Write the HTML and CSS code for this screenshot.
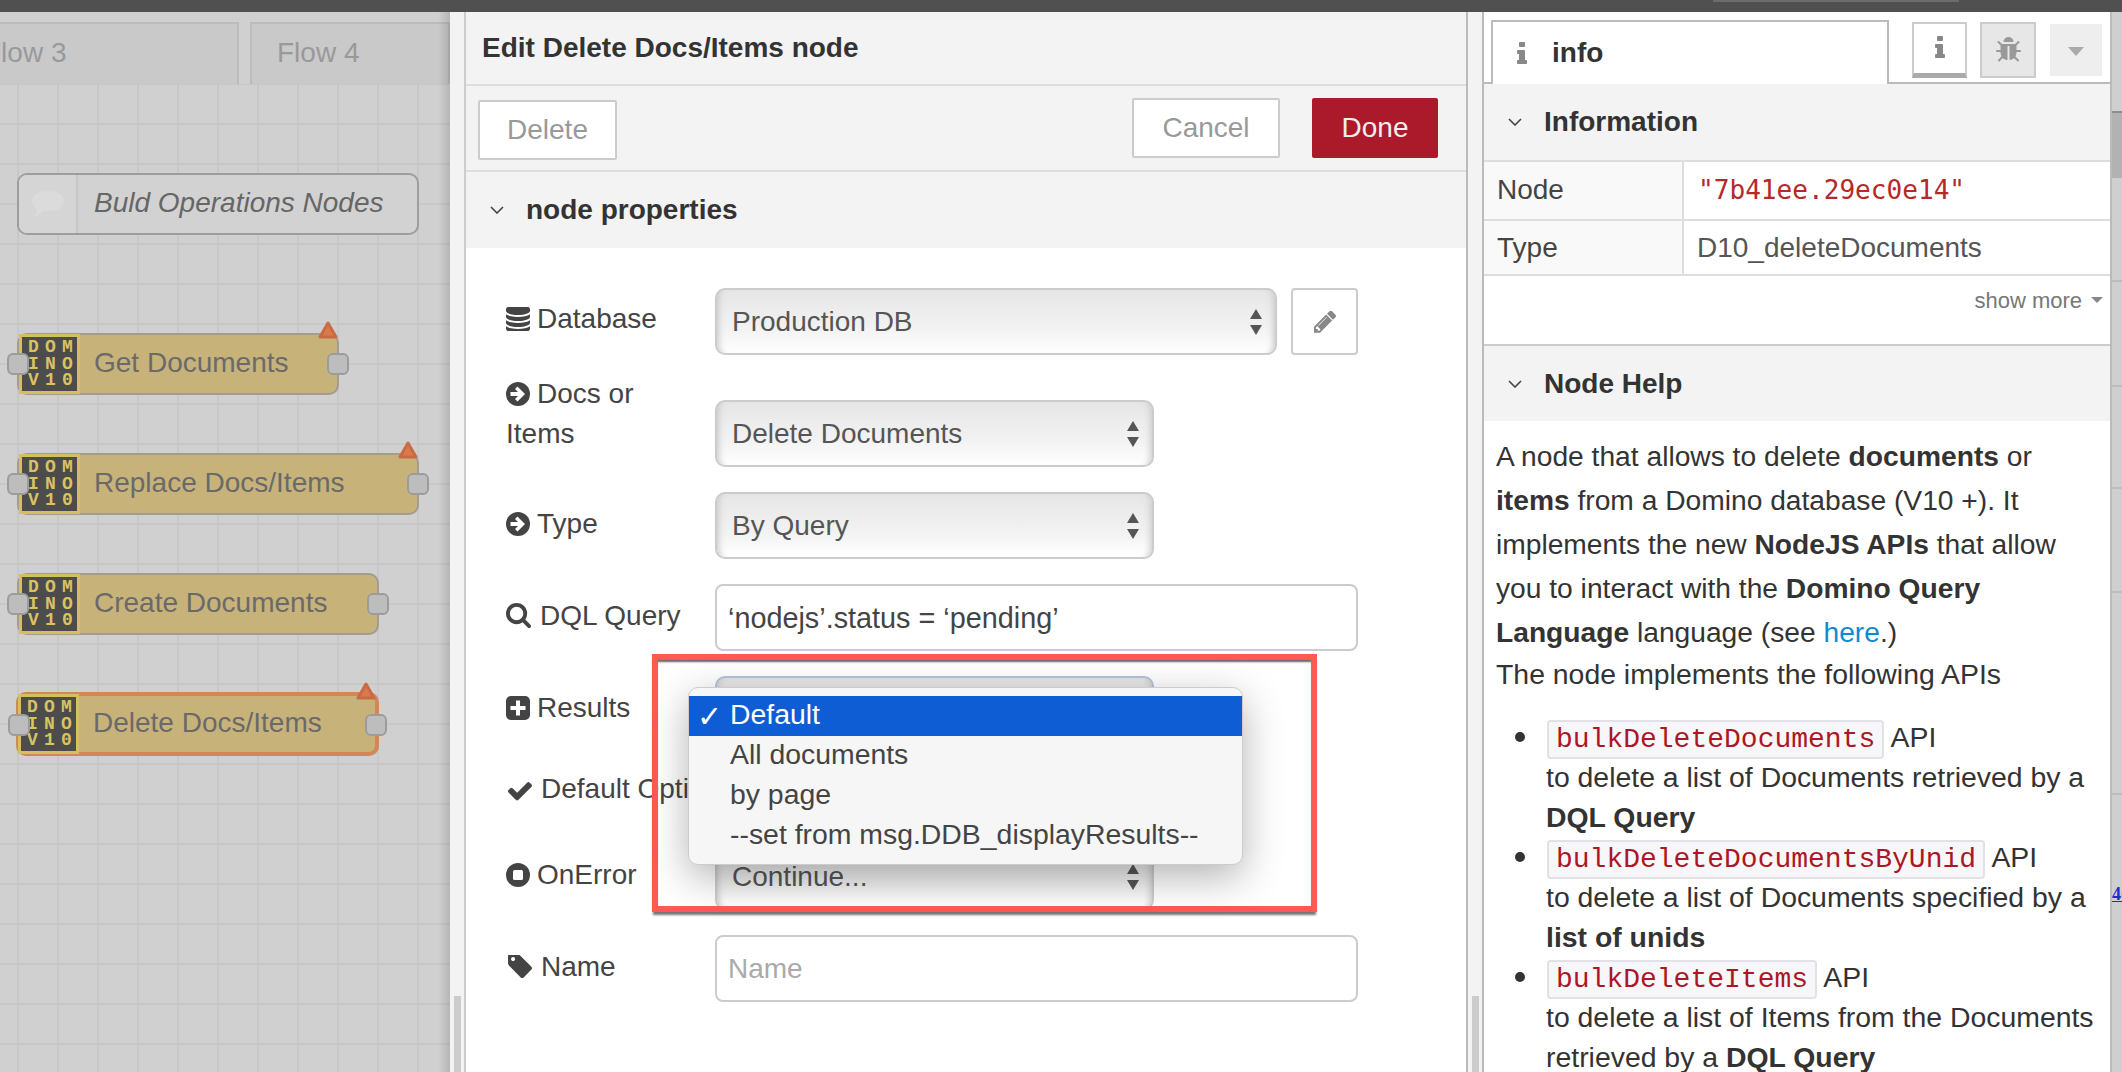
FILE: index.html
```html
<!DOCTYPE html>
<html lang="en">
<head>
  <meta charset="UTF-8">
  <title>Edit Delete Docs/Items node</title>
  <link rel="stylesheet" href="styles.css">
</head>
<body>
  <svg class="sprite" xmlns="http://www.w3.org/2000/svg">
    <symbol id="i-database" viewBox="128 128 1536 1536"><path d="M896 768q237 0 443-43t325-127v170q0 69-103 128t-280 93.5-385 34.5-385-34.5-280-93.5-103-128v-170q119 84 325 127t443 43zm0 768q237 0 443-43t325-127v170q0 69-103 128t-280 93.5-385 34.5-385-34.5-280-93.5-103-128v-170q119 84 325 127t443 43zm0-384q237 0 443-43t325-127v170q0 69-103 128t-280 93.5-385 34.5-385-34.5-280-93.5-103-128v-170q119 84 325 127t443 43zm0-1152q208 0 385 34.5t280 93.5 103 128v128q0 69-103 128t-280 93.5-385 34.5-385-34.5-280-93.5-103-128v-128q0-69 103-128t280-93.5 385-34.5z"/></symbol>
    <symbol id="i-arrow" viewBox="0 0 24 24"><circle cx="12" cy="12" r="12"/><path d="M4.5 10h7.5l-3-3 2.5-2.5 7.5 7.5-7.5 7.5-2.5-2.5 3-3H4.500z" fill="#fff"/></symbol>
    <symbol id="i-search" viewBox="64 128 1664 1664"><path d="M1216 832q0-185-131.500-316.500t-316.500-131.500-316.500 131.500-131.500 316.500 131.500 316.500 316.500 131.500 316.500-131.500 131.500-316.500zm512 832q0 52-38 90t-90 38q-54 0-90-38l-343-342q-179 124-399 124-143 0-273.500-55.500t-225-150-150-225-55.500-273.500 55.500-273.500 150-225 225-150 273.500-55.500 273.500 55.500 225 150 150 225 55.500 273.500q0 220-124 399l343 343q37 37 37 90z"/></symbol>
    <symbol id="i-plus" viewBox="0 0 24 24"><rect width="24" height="24" rx="5"/><path d="M10 4.500h4V10h5.500v4H14v5.500h-4V14H4.500v-4H10z" fill="#fff"/></symbol>
    <symbol id="i-check" viewBox="128 320 1543 1176"><path d="M1671 566q0 40-28 68l-724 724-136 136q-28 28-68 28t-68-28l-136-136-362-362q-28-28-28-68t28-68l136-136q28-28 68-28t68 28l294 295 656-657q28-28 68-28t68 28l136 136q28 28 28 68z"/></symbol>
    <symbol id="i-stop" viewBox="0 0 24 24"><circle cx="12" cy="12" r="12"/><rect x="7" y="7" width="10" height="10" rx="1.500" fill="#fff"/></symbol>
    <symbol id="i-tag" viewBox="128 192 1515 1515"><path d="M576 448q0-53-37.500-90.500t-90.500-37.500-90.500 37.500-37.500 90.500 37.500 90.500 90.500 37.500 90.500-37.500 37.500-90.500zm1067 576q0 53-37 90l-491 492q-39 37-91 37-53 0-90-37l-715-716q-38-37-64.500-101t-26.500-117v-416q0-52 38-90t90-38h416q53 0 117 26.500t102 64.500l715 714q37 39 37 91z"/></symbol>
    <symbol id="i-pencil" viewBox="128 192 1515 1472"><path d="M491 1536l91-91-235-235-91 91v107h128v128h107zm523-928q0-22-22-22-10 0-17 7l-542 542q-7 7-7 17 0 22 22 22 10 0 17-7l542-542q7-7 7-17zm-54-192l416 416-832 832h-416v-416zm683 96q0 53-37 90l-166 166-416-416 166-165q36-38 90-38 53 0 91 38l235 234q37 39 37 91z"/></symbol>
    <symbol id="i-bug" viewBox="96 64 1600 1600"><path d="M1696 960q0 26-19 45t-45 19h-224q0 171-67 290l208 209q19 19 19 45t-19 45q-18 19-45 19t-45-19l-198-197q-5 5-15 13t-42 28.500-65 36.500-82 29-97 13v-896h-128v896q-51 0-101.500-13.500t-87-33-66-39-43.500-32.500l-15-14-183 207q-20 21-48 21-24 0-43-16-19-18-20.500-44.500t15.500-46.500l202-227q-58-114-58-274h-224q-26 0-45-19t-19-45 19-45 45-19h224v-294l-173-173q-19-19-19-45t19-45 45-19 45 19l173 173h844l173-173q19-19 45-19t45 19 19 45-19 45l-173 173v294h224q26 0 45 19t19 45zm-480-576h-640q0-133 93.500-226.500t226.500-93.500 226.500 93.500 93.500 226.500z"/></symbol>
    <symbol id="i-info" viewBox="0 0 704 1408"><path d="M704 1216v128q0 26-19 45t-45 19h-512q-26 0-45-19t-19-45v-128q0-26 19-45t45-19h64v-384h-64q-26 0-45-19t-19-45v-128q0-26 19-45t45-19h384q26 0 45 19t19 45v576h64q26 0 45 19t19 45zm-128-1152v192q0 26-19 45t-45 19h-256q-26 0-45-19t-19-45v-192q0-26 19-45t45-19h256q26 0 45 19t19 45z"/></symbol>
    <symbol id="i-chevron" viewBox="0 0 14 8"><path d="M1 1l6 6 6-6" fill="none" stroke="currentColor" stroke-width="1.600"/></symbol>
    <symbol id="i-warn" viewBox="0 0 20 18"><path d="M10 2L18 16H2z" fill="#d9794e" stroke="#c96a45" stroke-width="3" stroke-linejoin="round"/></symbol>
  </svg>

  <div class="topbar"><div class="topbar-piece"></div></div>

  <div class="main">
    <!-- workspace, dimmed behind the tray -->
    <div class="workspace">
      <div class="tabs">
        <div class="tab tab-first">Flow 3</div>
        <div class="tab">Flow 4</div>
      </div>
      <div class="canvas">
        <div class="comment">
          <div class="comment-icon">
            <svg width="34" height="28" viewBox="0 0 34 28"><path d="M17 1c9 0 16 4 16 10s-7 10-16 10c-2 0-3 0-5 0-2 3-6 5-10 6 2-2 4-5 4-8C3 17 1 14 1 11 1 5 8 1 17 1z" fill="#dbdbdb"/></svg>
          </div>
          <span>Buld Operations Nodes</span>
        </div>

        <div class="node node-get">
          <div class="domino"><span>D</span><span>O</span><span>M</span><span>I</span><span>N</span><span>O</span><span>V</span><span>1</span><span>0</span></div>
          <span class="node-label">Get Documents</span>
          <i class="port port-in"></i><i class="port port-out"></i>
          <svg class="warn"><use href="#i-warn"/></svg>
        </div>
        <div class="node node-replace">
          <div class="domino"><span>D</span><span>O</span><span>M</span><span>I</span><span>N</span><span>O</span><span>V</span><span>1</span><span>0</span></div>
          <span class="node-label">Replace Docs/Items</span>
          <i class="port port-in"></i><i class="port port-out"></i>
          <svg class="warn"><use href="#i-warn"/></svg>
        </div>
        <div class="node node-create">
          <div class="domino"><span>D</span><span>O</span><span>M</span><span>I</span><span>N</span><span>O</span><span>V</span><span>1</span><span>0</span></div>
          <span class="node-label">Create Documents</span>
          <i class="port port-in"></i><i class="port port-out"></i>
        </div>
        <div class="node node-delete">
          <div class="domino"><span>D</span><span>O</span><span>M</span><span>I</span><span>N</span><span>O</span><span>V</span><span>1</span><span>0</span></div>
          <span class="node-label">Delete Docs/Items</span>
          <i class="port port-in"></i><i class="port port-out"></i>
          <svg class="warn"><use href="#i-warn"/></svg>
        </div>
      </div>
    </div>

    <div class="strip"><div class="strip-thumb"></div></div>

    <!-- edit tray -->
    <div class="tray">
      <div class="tray-title">Edit Delete Docs/Items node</div>
      <div class="tray-toolbar">
        <button class="btn btn-delete">Delete</button>
        <div class="toolbar-right">
          <button class="btn btn-cancel">Cancel</button>
          <button class="btn btn-done">Done</button>
        </div>
      </div>
      <div class="section-head tray-section">
        <svg class="chevron"><use href="#i-chevron"/></svg>
        <span>node properties</span>
      </div>

      <div class="form">
        <div class="row">
          <div class="label"><svg class="ic ic-db"><use href="#i-database"/></svg>Database</div>
          <div class="select select-wide"><span>Production DB</span><i class="arrows"></i></div>
          <button class="edit-btn"><svg width="22" height="22"><use href="#i-pencil"/></svg></button>
        </div>
        <div class="row row-docs">
          <div class="label label-docs"><svg class="ic"><use href="#i-arrow"/></svg>Docs or<br>Items</div>
          <div class="select"><span>Delete Documents</span><i class="arrows"></i></div>
        </div>
        <div class="row">
          <div class="label"><svg class="ic"><use href="#i-arrow"/></svg>Type</div>
          <div class="select"><span>By Query</span><i class="arrows"></i></div>
        </div>
        <div class="row">
          <div class="label"><svg class="ic ic-search"><use href="#i-search"/></svg>DQL Query</div>
          <div class="input input-query">‘nodejs’.status = ‘pending’</div>
        </div>
        <div class="row">
          <div class="label"><svg class="ic"><use href="#i-plus"/></svg>Results</div>
          <div class="select select-focus"><span>Default</span><i class="arrows"></i></div>
        </div>
        <div class="row row-default">
          <div class="label"><svg class="ic ic-check"><use href="#i-check"/></svg>Default Options</div>
          <div class="select"><span></span><i class="arrows"></i></div>
        </div>
        <div class="row">
          <div class="label"><svg class="ic"><use href="#i-stop"/></svg>OnError</div>
          <div class="select"><span>Continue...</span><i class="arrows"></i></div>
        </div>
        <div class="row">
          <div class="label"><svg class="ic ic-tag"><use href="#i-tag"/></svg>Name</div>
          <div class="input input-empty">Name</div>
        </div>
      </div>

      <div class="callout"></div>
      <ul class="dropdown">
        <li class="selected"><b>✓</b>Default</li>
        <li>All documents</li>
        <li>by page</li>
        <li>--set from msg.DDB_displayResults--</li>
      </ul>
    </div>

    <div class="strip strip-mid"><div class="strip-thumb"></div></div>

    <!-- info sidebar -->
    <div class="sidebar">
      <div class="side-head">
        <div class="side-tab"><svg class="side-tab-icon"><use href="#i-info"/></svg>info</div>
        <button class="side-btn side-btn-on"><svg width="11" height="22"><use href="#i-info"/></svg></button>
        <button class="side-btn side-btn-bug"><svg width="25" height="25"><use href="#i-bug"/></svg></button>
        <button class="side-btn side-btn-menu"><i class="caret-lg"></i></button>
      </div>

      <div class="section-head side-section">
        <svg class="chevron"><use href="#i-chevron"/></svg>
        <span>Information</span>
      </div>
      <table class="props">
        <tr class="prop-node"><td class="prop-key">Node</td><td class="prop-id">"7b41ee.29ec0e14"</td></tr>
        <tr class="prop-type"><td class="prop-key">Type</td><td>D10_deleteDocuments</td></tr>
      </table>
      <div class="show-more">show more <i class="caret-sm"></i></div>

      <div class="section-head side-section side-help">
        <svg class="chevron"><use href="#i-chevron"/></svg>
        <span>Node Help</span>
      </div>
      <div class="help">
        <p class="help-intro">A node that allows to delete <b>documents</b> or<br><b>items</b> from a Domino database (V10 +). It<br>implements the new <b>NodeJS APIs</b> that allow<br>you to interact with the <b>Domino Query<br>Language</b> language (see <a href="#">here</a>.)</p>
        <p class="help-line">The node implements the following APIs</p>
        <ul class="help-list">
          <li><code>bulkDeleteDocuments</code> API<br>to delete a list of Documents retrieved by a<br><b>DQL Query</b></li>
          <li><code>bulkDeleteDocumentsByUnid</code> API<br>to delete a list of Documents specified by a<br><b>list of unids</b></li>
          <li><code>bulkDeleteItems</code> API<br>to delete a list of Items from the Documents<br>retrieved by a <b>DQL Query</b></li>
        </ul>
      </div>
    </div>

    <!-- sliver of the page behind the window -->
    <div class="behind">
      <div class="behind-a"></div>
      <div class="behind-thumb"></div>
      <div class="behind-b b1"></div>
      <div class="behind-b b2"></div>
      <div class="behind-b b3"></div>
      <div class="behind-b b4"></div>
      <div class="behind-b b5"></div>
      <a class="behind-link" href="#">4(</a>
    </div>
  </div>
</body>
</html>
```

FILE: styles.css
```css
html, body {
  margin: 0;
  height: 100%;
  overflow: hidden;
}
body {
  background: #fff;
  color: #333;
  font-family: "Liberation Sans", Arial, sans-serif;
  font-size: 28px;
}
.sprite {
  display: none;
}
svg {
  fill: currentColor;
}
button {
  font: inherit;
  cursor: pointer;
}

.topbar {
  height: 12px;
  background: #505050;
}
.topbar-piece {
  width: 246px;
  height: 2px;
  margin-left: 1713px;
  background: #6c6c6c;
}
.main {
  display: flex;
  height: 1060px;
}

/* workspace */
.workspace {
  position: relative;
  flex: 0 0 450px;
  overflow: hidden;
  background: #d0d0d0;
}
.workspace::after {
  content: "";
  position: absolute;
  top: 0;
  right: 0;
  bottom: 0;
  width: 12px;
  background: linear-gradient(to right, rgba(0,0,0,0), rgba(0,0,0,.13));
}
.tabs {
  display: flex;
  height: 72px;
  padding-top: 10px;
  box-sizing: border-box;
  margin-left: -44px;
  gap: 11px;
}
.tab {
  width: 173px;
  padding-left: 25px;
  border: 2px solid #bcbcbc;
  border-bottom: 0;
  background: #c9c9c9;
  color: #999;
  line-height: 58px;
}
.tab-first {
  width: 256px;
  padding-left: 26px;
}
.canvas {
  position: relative;
  height: 988px;
  background-color: #d0d0d0;
  background-image:
    linear-gradient(to right, #c8c8c8 2px, transparent 2px),
    linear-gradient(to bottom, #c8c8c8 2px, transparent 2px);
  background-size: 40px 40px;
  background-position: 17px 39px;
}
.comment {
  position: absolute;
  left: 17px;
  top: 89px;
  width: 402px;
  height: 62px;
  box-sizing: border-box;
  display: flex;
  align-items: center;
  border: 2px solid #9e9e9e;
  border-radius: 10px;
  background: #d2d2d2;
  color: #666;
  font-style: italic;
}
.comment > span {
  padding-bottom: 2px;
}
.comment-icon {
  width: 59px;
  height: 100%;
  margin-right: 16px;
  display: flex;
  align-items: center;
  justify-content: center;
  border-right: 2px solid #c6c6c6;
  box-sizing: border-box;
  background: #d5d5d5;
  border-radius: 8px 0 0 8px;
}
.node {
  position: absolute;
  left: 17px;
  height: 62px;
  box-sizing: border-box;
  display: flex;
  align-items: center;
  border: 2px solid #a29d90;
  border-radius: 10px;
  background: #c7b37a;
  color: #6a6a6a;
}
.node-label {
  padding-bottom: 2px;
}
.node-get { top: 249px; width: 322px; }
.node-replace { top: 369px; width: 402px; }
.node-create { top: 489px; width: 362px; }
.node-delete { top: 608px; width: 363px; border: 4px solid #d2875a; left: 16px; height: 64px; }
.node-delete .domino { margin-left: -2px; }
.domino {
  width: 52px;
  height: 52px;
  margin-right: 14px;
  padding: 2px 0 0 3px;
  box-sizing: content-box;
  border: 3px solid #d6bf62;
  display: grid;
  grid-template-columns: repeat(3, 17px);
  grid-template-rows: repeat(3, 16.500px);
  align-items: center;
  justify-items: center;
  background: #4c4c4c;
  color: #d9c262;
  font-family: "Liberation Mono", monospace;
  font-size: 18px;
  font-weight: bold;
  line-height: 16px;
}
.port {
  position: absolute;
  top: 18px;
  width: 22px;
  height: 22px;
  box-sizing: border-box;
  border: 2px solid #9c9c9c;
  border-radius: 6px;
  background: #bdbdbd;
}
.port-in { left: -12px; }
.port-out { right: -12px; }
.warn {
  position: absolute;
  top: -14px;
  right: -1px;
  width: 20px;
  height: 18px;
}

/* gutters between the panels */
.strip {
  flex: 0 0 14px;
  display: flex;
  flex-direction: column;
  justify-content: flex-end;
  background: #f3f3f3;
}
.strip-mid {
  flex-basis: 14px;
}
.strip-thumb {
  width: 7px;
  height: 76px;
  margin-left: 4px;
  background: #ccc;
}

/* tray */
.tray {
  position: relative;
  flex: 0 0 1000px;
  border-left: 2px solid #ccc;
  border-right: 2px solid #bbb;
  background: #fff;
}
.tray-title {
  height: 72px;
  padding-left: 16px;
  border-bottom: 2px solid #dedede;
  background: #f3f3f3;
  font-weight: bold;
  line-height: 72px;
}
.tray-toolbar {
  height: 86px;
  padding: 12px 28px 0 12px;
  box-sizing: border-box;
  display: flex;
  justify-content: space-between;
  border-bottom: 2px solid #dedede;
  background: #f3f3f3;
}
.toolbar-right {
  display: flex;
  gap: 32px;
}
.btn {
  height: 60px;
  padding: 0;
  border: 2px solid #ccc;
  border-radius: 2px;
  background: #fff;
  color: #999;
}
.btn-delete {
  width: 139px;
  margin-top: 2px;
}
.btn-cancel {
  width: 148px;
}
.btn-done {
  width: 126px;
  border-color: #ab1a2b;
  background: #ab1a2b;
  color: #eee;
}
.section-head {
  display: flex;
  align-items: center;
  background: #f3f3f3;
  font-weight: bold;
}
.tray-section {
  height: 76px;
  padding-left: 24px;
}
.chevron {
  width: 14px;
  height: 8px;
  margin-right: 22px;
  color: #444;
}

/* form */
.form {
  padding: 40px 0 0 40px;
  color: #444;
}
.row {
  display: flex;
  align-items: center;
  height: 67px;
  margin-bottom: 25px;
}
.row-docs {
  height: 95px;
  margin-top: -8px;
  align-items: flex-end;
}
.row-default {
  margin-top: -11px;
  margin-bottom: 19px;
}
.label {
  flex: 0 0 209px;
  margin-bottom: 4px;
  line-height: 40px;
  white-space: nowrap;
}
.row:first-child .label {
  margin-bottom: 6px;
}
.label-docs {
  margin-bottom: 13px;
}
.ic {
  width: 24px;
  height: 24px;
  margin-right: 7px;
  vertical-align: -3px;
  color: #444;
}
.ic-search {
  width: 25px;
  height: 25px;
  margin-right: 9px;
}
.ic-check {
  margin: 0 9px 0 2px;
  height: 20px;
}
.ic-tag {
  margin: 0 9px 0 2px;
}
.select {
  width: 439px;
  height: 67px;
  padding-left: 15px;
  box-sizing: border-box;
  display: flex;
  align-items: center;
  justify-content: space-between;
  border: 2px solid #ccc;
  border-radius: 10px;
  background: linear-gradient(to bottom, #e6e6e6, #f2f2f2 60%, #fff);
  box-shadow: inset 8px 0 6px -6px #ccc, inset -8px 0 6px -6px #ccc;
  color: #555;
}
.select-wide {
  width: 562px;
}
.select-focus {
  border-color: #b4c3da;
}
.arrows {
  position: relative;
  width: 13px;
  height: 26px;
  margin-right: 12px;
}
.arrows::before,
.arrows::after {
  content: "";
  position: absolute;
  left: 0;
  border-left: 6.500px solid transparent;
  border-right: 6.500px solid transparent;
}
.arrows::before {
  top: 0;
  border-bottom: 10px solid #555;
}
.arrows::after {
  bottom: 0;
  border-top: 10px solid #555;
}
.edit-btn {
  width: 67px;
  height: 67px;
  margin-left: 14px;
  padding: 0 0 0 1px;
  display: flex;
  align-items: center;
  justify-content: center;
  border: 2px solid #ccc;
  border-radius: 4px;
  background: #fff;
  color: #888;
}
.input {
  width: 643px;
  height: 67px;
  padding-left: 11px;
  box-sizing: border-box;
  display: flex;
  align-items: center;
  border: 2px solid #ccc;
  border-radius: 8px;
  background: #fff;
  color: #444;
}
.input-query {
  padding-top: 2px;
  font-size: 28.800px;
}
.input-empty {
  color: #aaa;
}

/* red annotation and the open select menu */
.callout {
  position: absolute;
  left: 186px;
  top: 642px;
  width: 653px;
  height: 246px;
  border: 6px solid #ff5a52;
  box-shadow: inset 0 3px 2px -1px #666, 0 4px 2px -1px #777;
}
.dropdown {
  position: absolute;
  left: 222px;
  top: 675px;
  width: 555px;
  margin: 0;
  padding: 8px 0;
  box-sizing: border-box;
  border: 1px solid #ccc;
  border-radius: 10px;
  list-style: none;
  background: #f6f6f6;
  box-shadow: 0 12px 40px rgba(0,0,0,.3);
  color: #444;
  font-size: 28.400px;
}
.dropdown li {
  height: 40px;
  padding-left: 41px;
  line-height: 36px;
  white-space: nowrap;
}
.dropdown .selected {
  position: relative;
  background: #0f5dd5;
  color: #fff;
}
.dropdown b {
  position: absolute;
  left: 8px;
  top: 3px;
  font-family: "DejaVu Sans", sans-serif;
  font-size: 30px;
  font-weight: bold;
}

/* sidebar */
.sidebar {
  flex: 0 0 626px;
  border-left: 2px solid #bbb;
  border-right: 2px solid #bbb;
  overflow: hidden;
  background: #fff;
}
.side-head {
  height: 70px;
  display: flex;
  align-items: flex-start;
  border-bottom: 2px solid #bbb;
}
.side-tab {
  width: 394px;
  height: 62px;
  margin: 8px 0 -2px 7px;
  display: flex;
  align-items: center;
  border: 2px solid #bbb;
  border-bottom: 0;
  background: #fff;
  font-weight: bold;
}
.side-tab-icon {
  width: 11px;
  height: 22px;
  margin: 0 25px 0 23px;
  color: #888;
}
.side-btn {
  width: 56px;
  height: 56px;
  margin: 10px 0 0 13px;
  padding: 0;
  display: flex;
  align-items: center;
  justify-content: center;
  border: 2px solid #ccc;
  background: #fff;
  color: #888;
}
.side-btn-on {
  width: 55px;
  margin-left: 23px;
  border-bottom: 5px solid #aaa;
  padding-bottom: 4px;
}
.side-btn-bug {
  background: #e7e7e7;
  color: #999;
  padding-bottom: 2px;
}
.side-btn-menu {
  width: 52px;
  height: 52px;
  margin: 12px 0 0 14px;
  border: 0;
  background: #eee;
}
.caret-lg {
  width: 0;
  height: 0;
  margin-top: 2px;
  border-left: 8.500px solid transparent;
  border-right: 8.500px solid transparent;
  border-top: 9px solid #aaa;
}
.side-section {
  padding-left: 24px;
  height: 76px;
}
.props {
  width: 100%;
  border-collapse: collapse;
  border-top: 2px solid #ddd;
}
.props td {
  padding: 0 0 0 13px;
  border-bottom: 2px solid #ddd;
  color: #555;
}
.props .prop-node td {
  height: 55px;
  padding-bottom: 2px;
}
.prop-type td {
  height: 53px;
}
.prop-key {
  width: 185px;
  border-right: 2px solid #ddd;
  background: #f9f9f9;
  color: #444 !important;
}
.props .prop-id {
  padding-left: 14px;
  font-family: "DejaVu Sans Mono", monospace;
  font-size: 26.100px;
  color: #b72828;
}
.show-more {
  height: 68px;
  padding: 14px 7px 32px 0;
  box-sizing: border-box;
  display: flex;
  justify-content: flex-end;
  align-items: center;
  font-size: 22px;
  color: #777;
  line-height: 1;
}
.caret-sm {
  width: 0;
  height: 0;
  margin: 0 0 2px 9px;
  border-left: 6px solid transparent;
  border-right: 6px solid transparent;
  border-top: 6px solid #888;
}
.side-help {
  height: 75px;
  border-top: 2px solid #ccc;
}
.help {
  padding: 13px 0 0 12px;
  color: #333;
  font-size: 28.400px;
  white-space: nowrap;
}
.help p {
  margin: 0;
}
.help .help-intro {
  font-size: 28.200px;
  line-height: 44px;
}
.help-line {
  line-height: 40px;
}
.help a {
  color: #0e8ad3;
  text-decoration: none;
}
.help-list {
  margin: 23px 0 0;
  padding-left: 50px;
  line-height: 40px;
  list-style: none;
}
.help-list li {
  position: relative;
}
.help-list li::before {
  content: "";
  position: absolute;
  left: -31px;
  top: 15px;
  width: 10px;
  height: 10px;
  border-radius: 50%;
  background: #333;
}
code {
  margin-left: 1px;
  padding: 2px 7px;
  border: 2px solid #e1e1e8;
  border-radius: 4px;
  background: #f7f7f9;
  color: #ad1625;
  font-family: "Liberation Mono", monospace;
  font-size: 28px;
  line-height: 1;
}

/* right edge */
.behind {
  position: relative;
  flex: 1;
  overflow: hidden;
  background: #cfcfcf;
}
.behind-a {
  height: 99px;
  border-bottom: 2px solid #8d8d8d;
}
.behind-thumb {
  height: 65px;
  background: #b2b2b2;
}
.behind-b {
  border-bottom: 2px solid #bcbcbc;
}
.b1 { height: 102px; }
.b2 { height: 103px; }
.b3 { height: 100px; }
.b4 { height: 102px; }
.b5 { height: 200px; }
.behind-link {
  position: absolute;
  top: 872px;
  left: 0;
  color: #1a2fd0;
  font-family: "Liberation Serif", serif;
  font-size: 18px;
  font-weight: bold;
}
```
